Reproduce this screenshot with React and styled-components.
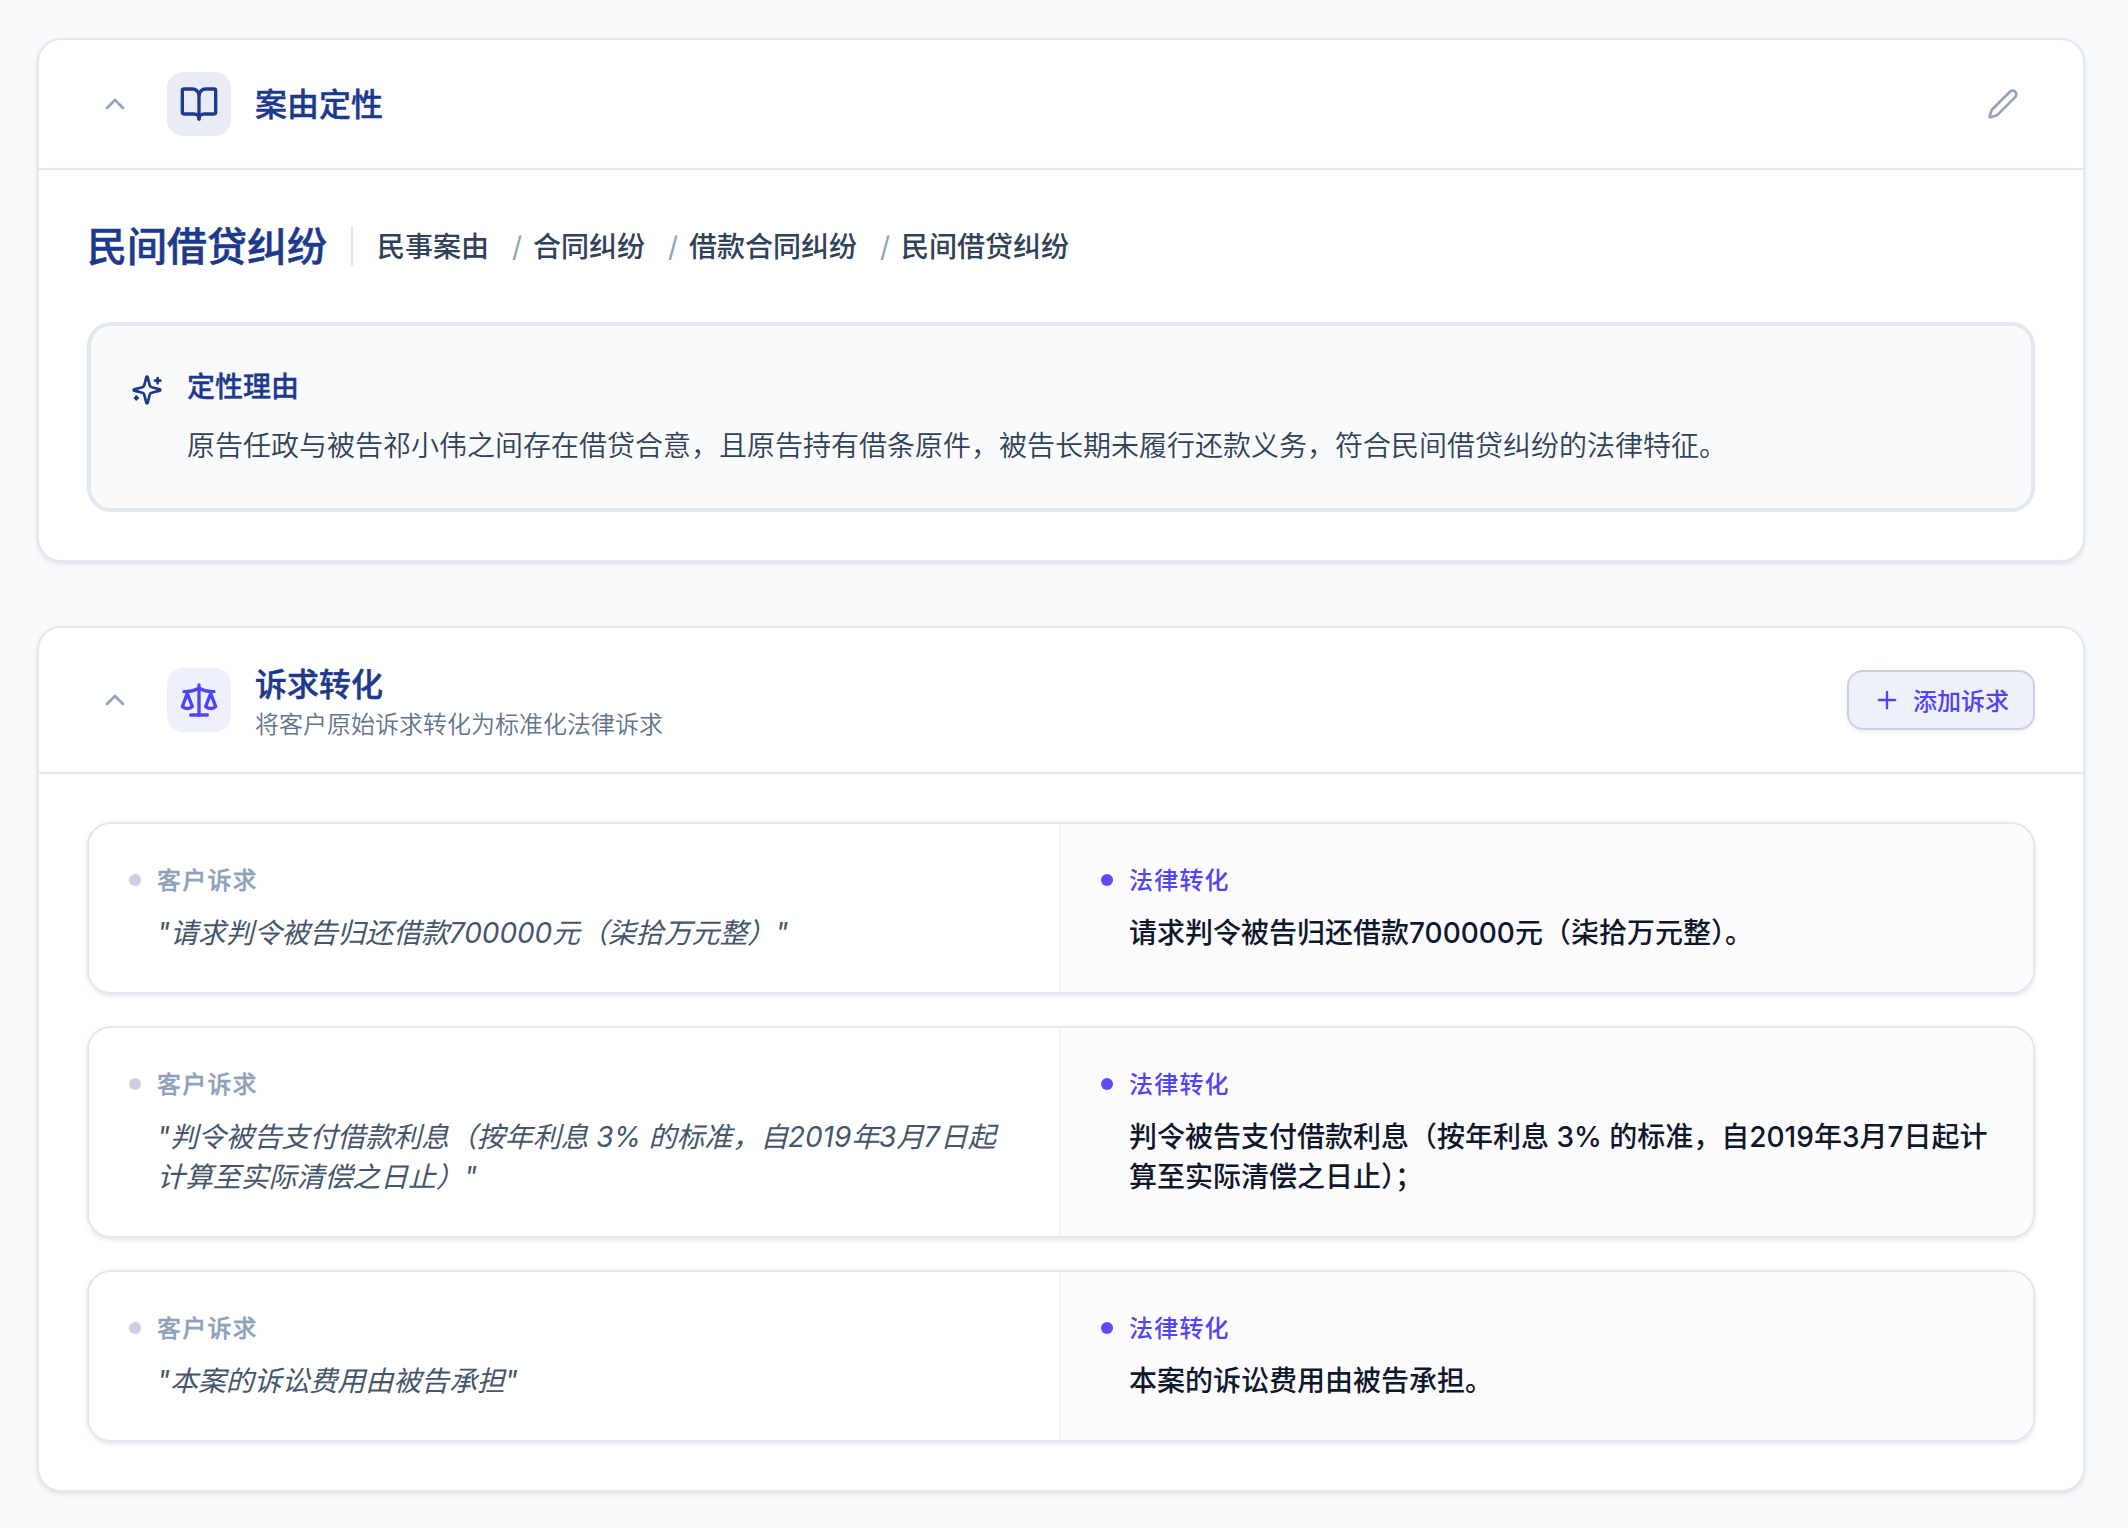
import React from 'react'
import styled, { createGlobalStyle } from 'styled-components'
import { BookOpen, ChevronUp, Pen, Plus, Scale } from 'lucide-react'

const GlobalStyle = createGlobalStyle`
* {
  box-sizing: border-box;
}

body {
  margin: 0;
  background: #f8fafc;
  font-family: Inter, 'Noto Sans CJK SC', sans-serif;
  -webkit-font-smoothing: antialiased;
}

h2, h3, h4, p, ol, ul {
  margin: 0;
  padding: 0;
}

svg {
  display: block;
  flex-shrink: 0;
}
`

const StyledPage = styled.main`
width: 2128px;
min-height: 1528px;
padding: 38px 43px 36px 37px;
display: flex;
flex-direction: column;
gap: 64px;
`

const StyledCard = styled.section`
border: 2px solid #e2e8f0;
border-radius: 24px;
background: #fff;
box-shadow: 0 2px 6px rgba(0, 0, 0, .06), 0 2px 4px -1px rgba(0, 0, 0, .08);
`

const StyledHeader = styled.header`
padding: 32px 48px;
display: flex;
align-items: center;
gap: 24px;
border-bottom: 2px solid #e2e8f0;
`

const StyledIconButton = styled.button`
width: ${props => props.$size}px;
height: ${props => props.$size}px;
padding: 0;
display: flex;
align-items: center;
justify-content: center;
border: 0;
border-radius: 16px;
background: transparent;
color: #94a3b8;
`

const StyledTile = styled.span`
width: 64px;
height: 64px;
display: flex;
align-items: center;
justify-content: center;
border-radius: 16px;
background: ${props => props.$accent ? '#eef1fb' : '#e9ecf4'};
color: ${props => props.$accent ? '#5243fb' : '#1e3a8a'};
`

const StyledTitles = styled.div`
flex: 1;
`

const StyledTitle = styled.h2`
padding-top: 1px;
margin-bottom: -1px;
font-size: 32px;
line-height: 48px;
font-weight: 500;
color: #1c398e;
-webkit-text-stroke: .4px currentColor;
`

const StyledSubtitle = styled.p`
padding-top: 1px;
margin-bottom: -1px;
font-size: 24px;
line-height: 32px;
font-weight: 350;
color: #62748e;
`

const StyledAddButton = styled.button`
height: 60px;
padding: 0 24px 2px;
display: flex;
align-items: center;
gap: 12px;
border: 2px solid #cacfe4;
border-radius: 16px;
background: #eef1fa;
box-shadow: 0 2px 4px rgba(0, 0, 0, .07);
font-family: inherit;
font-size: 24px;
font-weight: 500;
color: #5243fb;

svg {
  margin-top: 2px;
}
`

const StyledBody = styled.div`
padding: 48px;
display: flex;
flex-direction: column;
gap: ${props => props.$gap}px;
`

const StyledCause = styled.div`
height: 56px;
display: flex;
align-items: center;
gap: 24px;
`

const StyledCauseName = styled.h3`
padding-top: 2px;
font-size: 40px;
line-height: 56px;
font-weight: 500;
color: #1c398e;
-webkit-text-stroke: .5px currentColor;
`

const StyledDivider = styled.span`
width: 2px;
height: 40px;
background: #e2e8f0;
`

const StyledBreadcrumb = styled.ol`
padding-top: 2px;
display: flex;
list-style: none;
font-size: 28px;
line-height: 40px;
font-weight: 500;
color: #314158;
`

const StyledCrumb = styled.li`
display: flex;

& + &::before {
  content: '/';
  width: 21px;
  padding-left: 23px;
  font-weight: 400;
  color: #90a1b9;
}
`

const StyledReason = styled.div`
padding: 40px;
display: flex;
gap: 24px;
border: 4px solid #e2e8f0;
border-radius: 24px;
background: #f8fafc;
color: #1c398e;

svg {
  margin-top: 8px;
}
`

const StyledReasonTitle = styled.h4`
padding-top: 1px;
margin-bottom: 16px;
font-size: 28px;
line-height: 40px;
font-weight: 500;
-webkit-text-stroke: .3px currentColor;
`

const StyledReasonText = styled.p`
margin-bottom: -1px;
font-size: 28px;
line-height: 46px;
font-weight: 350;
color: #314158;
`

const StyledClaim = styled.article`
display: grid;
grid-template-columns: 1fr 1fr;
overflow: hidden;
border: 2px solid #e2e8f0;
border-radius: 24px;
background: #fff;
box-shadow: 0 2px 6px rgba(0, 0, 0, .06), 0 2px 4px -1px rgba(0, 0, 0, .08);
`

const StyledSide = styled.div`
padding: 40px;
background: ${props => props.$legal ? '#fcfcff' : '#fff'};
border-right: ${props => props.$legal ? '0' : '2px solid #f1f5f9'};
`

const StyledLabel = styled.div`
margin-bottom: 15px;
padding-top: 1px;
display: flex;
align-items: center;
gap: 16px;
font-size: 24px;
line-height: 32px;
font-weight: 500;
letter-spacing: 1.2px;
color: ${props => props.$legal ? '#5243fb' : '#90a1b9'};
-webkit-text-stroke: ${props => props.$legal ? '0' : '.3px currentColor'};

&::before {
  content: '';
  width: 12px;
  height: 12px;
  margin-top: -2px;
  border-radius: 50%;
  background: ${props => props.$legal ? '#5b4cf5' : '#cacfe4'};
}
`

const StyledText = styled.p`
padding: 1px 0 0 28px;
margin-bottom: -1px;
font-size: 28px;
line-height: 40px;
font-weight: ${props => props.$legal ? 500 : 400};
font-style: ${props => props.$legal ? 'normal' : 'italic'};
letter-spacing: ${props => props.$legal ? '0' : '-.1px'};
color: ${props => props.$legal ? '#0f172b' : '#45556c'};
`

const causePath = ['民事案由', '合同纠纷', '借款合同纠纷', '民间借贷纠纷']

const claims = [
  {
    client: '请求判令被告归还借款700000元（柒拾万元整）',
    legal: '请求判令被告归还借款700000元（柒拾万元整）。',
  },
  {
    client: '判令被告支付借款利息（按年利息 3% 的标准，自2019年3月7日起计算至实际清偿之日止）',
    legal: '判令被告支付借款利息（按年利息 3% 的标准，自2019年3月7日起计算至实际清偿之日止）；',
  },
  {
    client: '本案的诉讼费用由被告承担',
    legal: '本案的诉讼费用由被告承担。',
  },
]

/** Sparkles icon */
function Sparkles() {
  return (
    <svg
      width="32"
      height="32"
      viewBox="0 0 24 24"
      fill="none"
      stroke="currentColor"
      strokeWidth="2"
      strokeLinecap="round"
      strokeLinejoin="round"
    >
      <path d="M9.937 15.5A2 2 0 0 0 8.5 14.063l-6.135-1.582a.5.5 0 0 1 0-.962L8.5 9.936A2 2 0 0 0 9.937 8.5l1.582-6.135a.5.5 0 0 1 .963 0L14.063 8.5A2 2 0 0 0 15.5 9.937l6.135 1.581a.5.5 0 0 1 0 .964L15.5 14.063a2 2 0 0 0-1.437 1.437l-1.582 6.135a.5.5 0 0 1-.963 0z" />
      <path d="M20 3v4" />
      <path d="M22 5h-4" />
      <path d="M4 17v2" />
      <path d="M5 18H3" />
    </svg>
  )
}

/** Claim Component */
function Claim({ client, legal }) {
  return (
    <StyledClaim>
      <StyledSide>
        <StyledLabel>客户诉求</StyledLabel>
        <StyledText>{`"${client}"`}</StyledText>
      </StyledSide>
      <StyledSide $legal>
        <StyledLabel $legal>法律转化</StyledLabel>
        <StyledText $legal>{legal}</StyledText>
      </StyledSide>
    </StyledClaim>
  )
}

export default function App() {
  return (
    <>
      <GlobalStyle />
      <StyledPage>
        <StyledCard>
          <StyledHeader>
            <StyledIconButton $size={56} aria-label="收起">
              <ChevronUp size={32} />
            </StyledIconButton>
            <StyledTile>
              <BookOpen size={40} />
            </StyledTile>
            <StyledTitles>
              <StyledTitle>案由定性</StyledTitle>
            </StyledTitles>
            <StyledIconButton $size={64} aria-label="编辑">
              <Pen size={32} />
            </StyledIconButton>
          </StyledHeader>
          <StyledBody $gap={48}>
            <StyledCause>
              <StyledCauseName>民间借贷纠纷</StyledCauseName>
              <StyledDivider />
              <StyledBreadcrumb>
                {causePath.map(name => (
                  <StyledCrumb key={name}>{name}</StyledCrumb>
                ))}
              </StyledBreadcrumb>
            </StyledCause>
            <StyledReason>
              <Sparkles />
              <div>
                <StyledReasonTitle>定性理由</StyledReasonTitle>
                <StyledReasonText>
                  原告任政与被告祁小伟之间存在借贷合意，且原告持有借条原件，被告长期未履行还款义务，符合民间借贷纠纷的法律特征。
                </StyledReasonText>
              </div>
            </StyledReason>
          </StyledBody>
        </StyledCard>
        <StyledCard>
          <StyledHeader>
            <StyledIconButton $size={56} aria-label="收起">
              <ChevronUp size={32} />
            </StyledIconButton>
            <StyledTile $accent>
              <Scale size={40} />
            </StyledTile>
            <StyledTitles>
              <StyledTitle>诉求转化</StyledTitle>
              <StyledSubtitle>将客户原始诉求转化为标准化法律诉求</StyledSubtitle>
            </StyledTitles>
            <StyledAddButton>
              <Plus size={28} />
              添加诉求
            </StyledAddButton>
          </StyledHeader>
          <StyledBody $gap={32}>
            {claims.map(claim => (
              <Claim key={claim.client} {...claim} />
            ))}
          </StyledBody>
        </StyledCard>
      </StyledPage>
    </>
  )
}
